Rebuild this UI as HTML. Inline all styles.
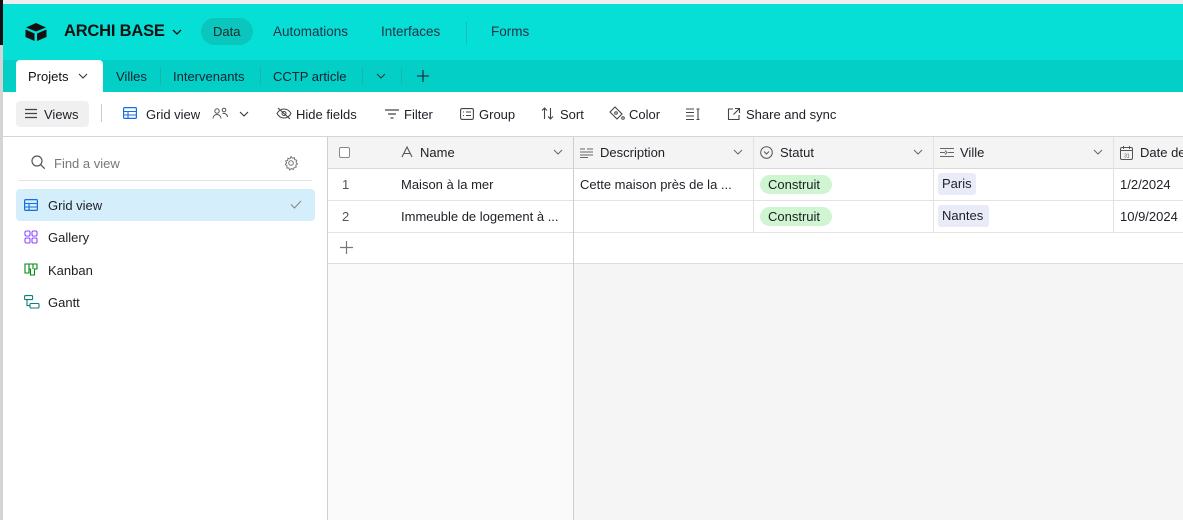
<!DOCTYPE html>
<html><head><style>
*{margin:0;padding:0;box-sizing:border-box}
body{width:1183px;height:520px;overflow:hidden;position:relative;background:#fff;font-family:"Liberation Sans",sans-serif;font-size:13px;color:#1d1f25}
.a{position:absolute;white-space:nowrap}
svg{position:absolute}
</style></head><body>
<div class="a" style="left:0;top:0;width:1183px;height:4px;background:#eee"></div>
<div class="a" style="left:0;top:4px;width:1183px;height:56px;background:#06dfd6"></div>
<div class="a" style="left:0;top:60px;width:1183px;height:32px;background:#04cfc6"></div>
<div class="a" style="left:0;top:0;width:3px;height:45px;background:#111"></div>
<div class="a" style="left:0;top:45px;width:3px;height:475px;background:#d4d4d4"></div>
<svg style="left:24px;top:22px" width="24" height="20" viewBox="0 0 24 20"><path d="M12 1L2 5.5 12 9.5 22 5.5Z" fill="#111"/><path d="M1.5 7.5L10.5 11.5V19L1.5 15Z" fill="#111"/><path d="M13 11.5L22.5 7.5V15L13 19Z" fill="#111"/></svg>
<div class="a" style="left:64px;top:22px;font-size:16.5px;font-weight:bold;color:#111;letter-spacing:-0.2px">ARCHI BASE</div>
<svg style="left:172px;top:28px" width="10" height="8"><path d="M1 2l4 4 4-4" stroke="#111" fill="none" stroke-width="1.3"/></svg>
<div class="a" style="left:201px;top:18px;width:52px;height:27px;border-radius:14px;background:#0bc6bd"></div>
<div class="a" style="left:213px;top:24px;color:#1d2a2a">Data</div>
<div class="a" style="left:273px;top:24px;color:#234;font-size:13.5px">Automations</div>
<div class="a" style="left:381px;top:24px;color:#234;font-size:13.5px">Interfaces</div>
<div class="a" style="left:466px;top:22px;width:1px;height:22px;background:#1cbab2"></div>
<div class="a" style="left:491px;top:24px;color:#234;font-size:13.5px">Forms</div>
<div class="a" style="left:16px;top:60px;width:87px;height:34px;background:#fff;border-radius:4px 4px 0 0"></div>
<div class="a" style="left:28px;top:69px;color:#111">Projets</div>
<svg style="left:78px;top:73px" width="10" height="7"><path d="M1 1l4 4 4-4" stroke="#333" fill="none" stroke-width="1.1"/></svg>
<div class="a" style="left:116px;top:69px;color:#123">Villes</div>
<div class="a" style="left:160px;top:68px;width:1px;height:16px;background:#1ab4ab"></div>
<div class="a" style="left:173px;top:69px;color:#123">Intervenants</div>
<div class="a" style="left:260px;top:68px;width:1px;height:16px;background:#1ab4ab"></div>
<div class="a" style="left:273px;top:69px;color:#123">CCTP article</div>
<div class="a" style="left:362px;top:68px;width:1px;height:16px;background:#1ab4ab"></div>
<svg style="left:376px;top:73px" width="10" height="7"><path d="M1 1l4 4 4-4" stroke="#234" fill="none" stroke-width="1.1"/></svg>
<div class="a" style="left:401px;top:68px;width:1px;height:16px;background:#1ab4ab"></div>
<svg style="left:416px;top:69px" width="14" height="14"><path d="M7 1v12M1 7h12" stroke="#234" stroke-width="1.3"/></svg>
<div class="a" style="left:16px;top:101px;width:73px;height:26px;background:#f0f0f0;border-radius:4px"></div>
<svg style="left:25px;top:108px" width="12" height="11"><path d="M0 1.5h12M0 5.5h12M0 9.5h12" stroke="#444" stroke-width="1.3"/></svg>
<div class="a" style="left:44px;top:107px">Views</div>
<div class="a" style="left:101px;top:104px;width:1px;height:18px;background:#ccc"></div>
<svg style="left:123px;top:107px" width="14" height="12"><rect x=".6" y=".6" width="12.8" height="10.8" rx="1" fill="none" stroke="#166ee1" stroke-width="1.2"/><path d="M.6 4.5h12.8M.6 8h12.8M5 4.5v7" stroke="#166ee1" stroke-width="1.1"/></svg>
<div class="a" style="left:146px;top:107px">Grid view</div>
<svg style="left:212px;top:107px" width="17" height="13"><g fill="none" stroke="#555" stroke-width="1"><circle cx="5" cy="4" r="2.2"/><path d="M1 11.5c0-2.5 2-4 4-4s4 1.5 4 4"/><circle cx="12" cy="3" r="1.8"/><path d="M10.5 6.5c2.5-.5 5 .8 5 3.5"/></g></svg>
<svg style="left:239px;top:111px" width="10" height="7"><path d="M1 1l4 4 4-4" stroke="#333" fill="none" stroke-width="1.1"/></svg>
<svg style="left:276px;top:107px" width="16" height="13"><path d="M1 6.5C3 3 5.5 2 8 2s5 1 7 4.5C13 10 10.5 11 8 11S3 10 1 6.5Z" fill="none" stroke="#444" stroke-width="1.1"/><circle cx="8" cy="6.5" r="2" fill="none" stroke="#444"/><path d="M2 1l12 11" stroke="#444" stroke-width="1.1"/></svg>
<div class="a" style="left:296px;top:107px">Hide fields</div>
<svg style="left:385px;top:109px" width="14" height="10"><path d="M0 1h14M3 5h8M5.5 9h3" stroke="#444" stroke-width="1.2"/></svg>
<div class="a" style="left:404px;top:107px">Filter</div>
<svg style="left:460px;top:108px" width="14" height="12"><rect x=".6" y=".6" width="12.8" height="10.8" rx="1.5" fill="none" stroke="#444" stroke-width="1.1"/><path d="M3 4h1M6 4h5M3 7.5h1M6 7.5h5" stroke="#444"/></svg>
<div class="a" style="left:479px;top:107px">Group</div>
<svg style="left:541px;top:107px" width="13" height="13"><path d="M3.5 12V1M1 3.5l2.5-2.5L6 3.5M9.5 1v11M7 9.5l2.5 2.5 2.5-2.5" stroke="#444" fill="none" stroke-width="1.1"/></svg>
<div class="a" style="left:560px;top:107px">Sort</div>
<svg style="left:609px;top:106px" width="16" height="15"><path d="M6 1l7 7-5 5-7-7Z" fill="none" stroke="#444" stroke-width="1.1"/><circle cx="7" cy="7" r="1.3" fill="none" stroke="#444"/><circle cx="14" cy="12" r="1.3" fill="none" stroke="#444"/></svg>
<div class="a" style="left:629px;top:107px">Color</div>
<svg style="left:686px;top:108px" width="16" height="12"><path d="M0 1h8M0 4.5h8M0 8h8M0 11.5h8M12 1v10.5M10.5 1h3M10.5 11.5h3" stroke="#444" stroke-width="1.1"/></svg>
<svg style="left:727px;top:107px" width="14" height="14"><path d="M6 2H1.5v10.5H12V8M8 1.5h4.5V6M12.5 1.5L6.5 7.5" stroke="#444" fill="none" stroke-width="1.1"/></svg>
<div class="a" style="left:746px;top:107px">Share and sync</div>
<div class="a" style="left:3px;top:136px;width:1180px;height:1px;background:#d6d6d6"></div>
<svg style="left:31px;top:155px" width="15" height="15"><circle cx="6" cy="6" r="5" fill="none" stroke="#555" stroke-width="1.2"/><path d="M9.7 9.7l4 4" stroke="#555" stroke-width="1.3"/></svg>
<div class="a" style="left:54px;top:156px;color:#777">Find a view</div>
<svg style="left:283px;top:155px" width="16" height="16" viewBox="0 0 16 16"><circle cx="8" cy="8" r="2.3" fill="none" stroke="#777"/><path d="M8 1.5l1.3 1.7 2-.6.4 2 2 .7-.6 2 1.4 1.5-1.7 1.3.4 2-2 .3-.8 2-1.9-.9L6.6 15 5.9 13 3.8 13l.2-2.1L2.3 9.6 3.6 8 2.7 6.1l2-.7.2-2.1 2 .5Z" fill="none" stroke="#777" stroke-width="1"/></svg>
<div class="a" style="left:18px;top:180px;width:294px;height:1px;background:#e2e2e2"></div>
<div class="a" style="left:16px;top:189px;width:299px;height:32px;background:#d4effb;border-radius:4px"></div>
<svg style="left:24px;top:199px" width="14" height="12"><rect x=".6" y=".6" width="12.8" height="10.8" rx="1" fill="none" stroke="#166ee1" stroke-width="1.2"/><path d="M.6 4.5h12.8M.6 8h12.8M5 4.5v7" stroke="#166ee1" stroke-width="1.1"/></svg>
<div class="a" style="left:48px;top:198px">Grid view</div>
<svg style="left:290px;top:200px" width="12" height="9"><path d="M1 4.5l3.5 3.5L11 1" stroke="#888" fill="none" stroke-width="1.1"/></svg>
<svg style="left:24px;top:230px" width="14" height="14"><g fill="none" stroke="#8b46ff" stroke-width="1.1"><rect x="1" y="1" width="5" height="5" rx="1.3"/><rect x="8" y="1" width="5" height="5" rx="1.3"/><rect x="1" y="8" width="5" height="5" rx="1.3"/><rect x="8" y="8" width="5" height="5" rx="1.3"/></g></svg>
<div class="a" style="left:48px;top:230px">Gallery</div>
<svg style="left:24px;top:263px" width="14" height="14"><path d="M1 1h12v5h-2.5v6h-4V6H5v4H1Z M5 1v5M9 1v5" fill="none" stroke="#048a0e" stroke-width="1.1"/></svg>
<div class="a" style="left:48px;top:263px">Kanban</div>
<svg style="left:24px;top:295px" width="16" height="14"><g fill="none" stroke="#0d7f78" stroke-width="1.1"><rect x=".6" y=".6" width="8" height="4" rx="1"/><rect x="6" y="8.5" width="9" height="4.5" rx="1"/><path d="M3 4.6v6h3"/></g></svg>
<div class="a" style="left:48px;top:295px">Gantt</div>
<div class="a" style="left:327px;top:136px;width:1px;height:384px;background:#d0d0d0"></div>
<div class="a" style="left:328px;top:137px;width:855px;height:32px;background:#f4f4f4;border-bottom:1px solid #dadada"></div>
<div class="a" style="left:328px;top:264px;width:245px;height:256px;background:#fafafa"></div>
<div class="a" style="left:574px;top:264px;width:609px;height:256px;background:#f5f5f5"></div>
<div class="a" style="left:328px;top:200px;width:855px;height:1px;background:#e3e3e3"></div>
<div class="a" style="left:328px;top:232px;width:855px;height:1px;background:#e3e3e3"></div>
<div class="a" style="left:328px;top:263px;width:855px;height:1px;background:#dedede"></div>
<div class="a" style="left:573px;top:137px;width:1px;height:383px;background:#cfcfcf"></div>
<div class="a" style="left:753px;top:137px;width:1px;height:96px;background:#e3e3e3"></div>
<div class="a" style="left:933px;top:137px;width:1px;height:96px;background:#e3e3e3"></div>
<div class="a" style="left:1113px;top:137px;width:1px;height:96px;background:#e3e3e3"></div>
<div class="a" style="left:339px;top:147px;width:11px;height:11px;border:1px solid #888;border-radius:2px;background:#fff"></div>
<svg style="left:401px;top:146px" width="12" height="12"><path d="M1 11L6 1l5 10M3 7.5h6" stroke="#555" fill="none" stroke-width="1.1"/></svg>
<div class="a" style="left:420px;top:145px">Name</div>
<svg style="left:553px;top:149px" width="10" height="7"><path d="M1 1l4 4 4-4" stroke="#666" fill="none"/></svg>
<svg style="left:580px;top:147px" width="13" height="11"><path d="M0 2h5M0 5h13M0 8h13M0 10.5h8M7 2h6" stroke="#666" stroke-width="1"/></svg>
<div class="a" style="left:600px;top:145px">Description</div>
<svg style="left:733px;top:149px" width="10" height="7"><path d="M1 1l4 4 4-4" stroke="#666" fill="none"/></svg>
<svg style="left:760px;top:146px" width="13" height="13"><circle cx="6.5" cy="6.5" r="5.8" fill="none" stroke="#555"/><path d="M4 5.5l2.5 2.5L9 5.5" stroke="#555" fill="none"/></svg>
<div class="a" style="left:780px;top:145px">Statut</div>
<svg style="left:913px;top:149px" width="10" height="7"><path d="M1 1l4 4 4-4" stroke="#666" fill="none"/></svg>
<svg style="left:940px;top:147px" width="14" height="11"><path d="M0 1.5h14M0 5.5h5M8 5.5h6M0 9.5h14M5 3.5l2 2-2 2" stroke="#666" fill="none"/></svg>
<div class="a" style="left:960px;top:145px">Ville</div>
<svg style="left:1093px;top:149px" width="10" height="7"><path d="M1 1l4 4 4-4" stroke="#666" fill="none"/></svg>
<svg style="left:1120px;top:146px" width="13" height="14"><rect x=".5" y="1.5" width="12" height="12" rx="1.5" fill="none" stroke="#555"/><path d="M.5 4.5h12M3.5 0v3M9.5 0v3" stroke="#555"/><text x="4" y="11.5" font-size="5" fill="#555">31</text></svg>
<div class="a" style="left:1140px;top:145px">Date de</div>
<div class="a" style="left:342px;top:177px;color:#555">1</div>
<div class="a" style="left:401px;top:177px">Maison à la mer</div>
<div class="a" style="left:580px;top:177px">Cette maison près de la ...</div>
<div class="a" style="left:760px;top:175px;width:72px;height:19px;background:#cff5d1;border-radius:10px"></div>
<div class="a" style="left:768px;top:177px">Construit</div>
<div class="a" style="left:938px;top:173px;width:38px;height:22px;background:#e9ecf8;border-radius:3px"></div>
<div class="a" style="left:942px;top:176px">Paris</div>
<div class="a" style="left:1120px;top:177px">1/2/2024</div>
<div class="a" style="left:342px;top:209px;color:#555">2</div>
<div class="a" style="left:401px;top:209px">Immeuble de logement à ...</div>
<div class="a" style="left:760px;top:207px;width:72px;height:19px;background:#cff5d1;border-radius:10px"></div>
<div class="a" style="left:768px;top:209px">Construit</div>
<div class="a" style="left:938px;top:205px;width:51px;height:22px;background:#e9ecf8;border-radius:3px"></div>
<div class="a" style="left:942px;top:208px">Nantes</div>
<div class="a" style="left:1120px;top:209px">10/9/2024</div>
<svg style="left:340px;top:241px" width="13" height="13"><path d="M6.5 0v13M0 6.5h13" stroke="#777" stroke-width="1.2"/></svg>
</body></html>
